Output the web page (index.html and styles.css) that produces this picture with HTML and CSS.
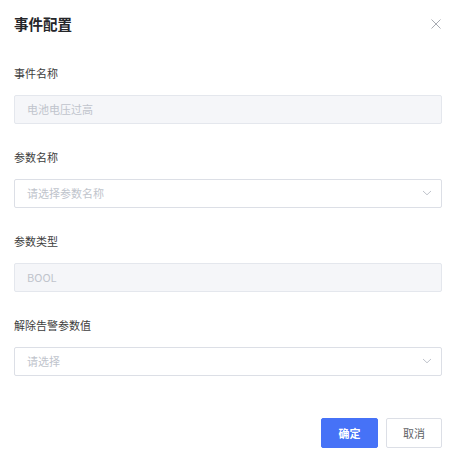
FILE: index.html
```html
<!DOCTYPE html>
<html lang="zh-CN">
<head>
<meta charset="utf-8">
<title>事件配置</title>
<link rel="stylesheet" href="styles.css">
</head>
<body>
<div class="dialog">
  <div class="header">
    <div class="title">事件配置</div>
    <svg class="close" width="10" height="10" viewBox="0 0 10 10"><path d="M0.5 0.5L9.5 9.5M9.5 0.5L0.5 9.5" stroke="#a8abb2" stroke-width="1" fill="none"/></svg>
  </div>
  <div class="form">
    <div class="item">
      <div class="label">事件名称</div>
      <div class="input disabled"><span class="ph">电池电压过高</span></div>
    </div>
    <div class="item">
      <div class="label">参数名称</div>
      <div class="input"><span class="ph">请选择参数名称</span>
        <svg class="chev" width="10" height="6" viewBox="0 0 10 6"><path d="M1 1L5 4.8L9 1" stroke="#c0c4cc" stroke-width="1" fill="none"/></svg>
      </div>
    </div>
    <div class="item">
      <div class="label">参数类型</div>
      <div class="input disabled"><span class="ph">BOOL</span></div>
    </div>
    <div class="item">
      <div class="label">解除告警参数值</div>
      <div class="input"><span class="ph">请选择</span>
        <svg class="chev" width="10" height="6" viewBox="0 0 10 6"><path d="M1 1L5 4.8L9 1" stroke="#c0c4cc" stroke-width="1" fill="none"/></svg>
      </div>
    </div>
  </div>
  <div class="footer">
    <button class="btn primary">确定</button>
    <button class="btn">取消</button>
  </div>
</div>
</body>
</html>
```
FILE: styles.css
```css
* { box-sizing: border-box; }
html, body { margin: 0; padding: 0; background: #fff; }
body {
  font-family: "Noto Sans CJK SC", "Noto Sans", "Liberation Sans", sans-serif;
  color: #303133;
}
.dialog {
  width: 457px;
  padding: 13px 15px 0 14px;
}
.header {
  display: flex;
  align-items: center;
  justify-content: space-between;
  height: 22px;
}
.title {
  font-size: 14.5px;
  font-weight: 700;
  line-height: 22px;
  color: #252629;
}
.close { margin-right: 1px; }
.form {
  margin-top: 27px;
  display: flex;
  flex-direction: column;
}
.item {
  display: flex;
  flex-direction: column;
  margin-bottom: 22.5px;
}
.label {
  font-size: 11px;
  line-height: 22px;
  color: #3d3d3d;
  margin-bottom: 11px;
}
.input {
  height: 28.5px;
  border: 1px solid #dcdfe6;
  border-radius: 2px;
  background: #fff;
  display: flex;
  align-items: center;
  justify-content: space-between;
  padding: 0 9px 0 12px;
}
.input.disabled {
  background: #f5f6f9;
  border-color: #e4e7ed;
}
.ph {
  font-size: 11px;
  color: #c0c4cc;
}
.footer {
  display: flex;
  justify-content: flex-end;
  gap: 8px;
  margin-top: 20px;
}
.btn {
  width: 56px;
  height: 30px;
  font-family: inherit;
  font-size: 11px;
  border: 1px solid #dcdfe6;
  border-radius: 2px;
  background: #fff;
  color: #606266;
  padding: 0;
}
.btn.primary {
  width: 57px;
  background: #4672f7;
  border-color: #4672f7;
  color: #fff;
  font-weight: 700;
}
```
